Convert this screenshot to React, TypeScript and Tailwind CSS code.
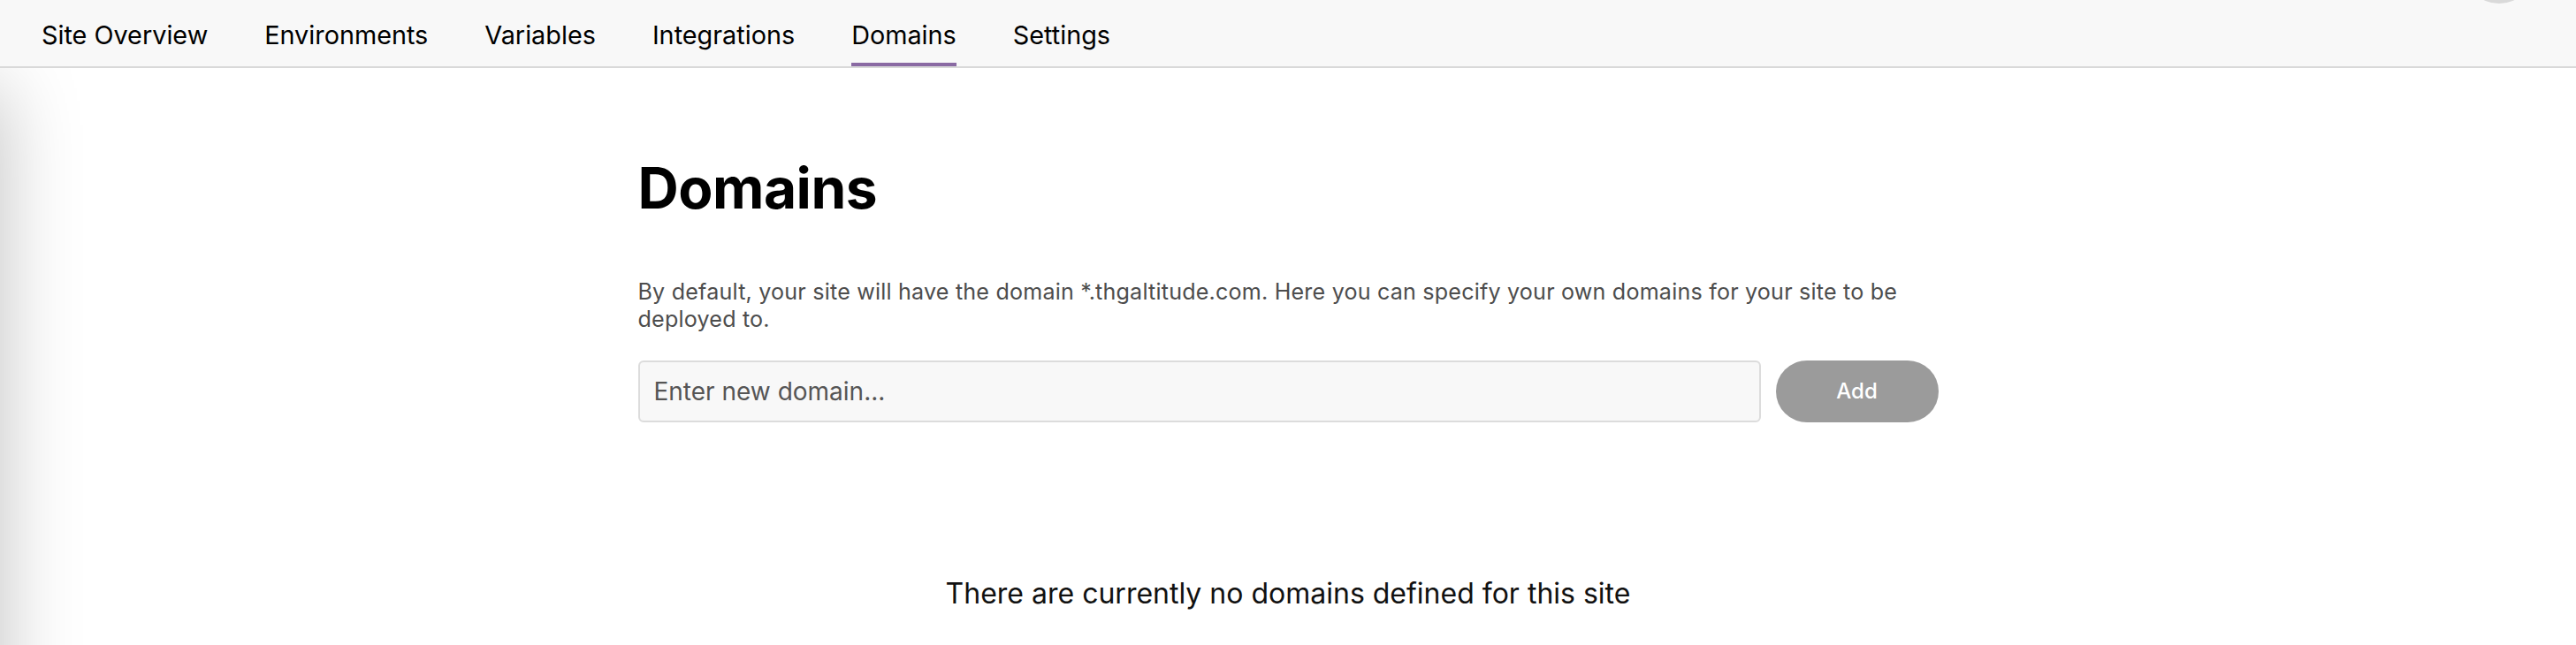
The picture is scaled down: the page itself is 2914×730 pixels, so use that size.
import React from "react";

const tabs = ["Site Overview", "Environments", "Variables", "Integrations", "Domains", "Settings"];

export default function App() {
  return (
    <div
      className="relative min-h-[730px] overflow-hidden bg-white text-black"
      style={{ fontFamily: "Inter, 'Noto Sans', sans-serif" }}
    >
      {/* left edge shadow */}
      <div className="absolute left-[-100px] top-[100px] h-[900px] w-[100px] shadow-[0_0_90px_rgba(0,0,0,0.25)]" />

      <header className="relative z-10 flex h-[77px] gap-[64px] border-b-2 border-[#d9d9d9] bg-[#f8f8f8] pl-[47px]">
        {tabs.map((t) => (
          <div key={t} className="relative h-full pt-[18px]">
            <span className="block text-[28.8px] leading-normal text-black whitespace-nowrap">{t}</span>
            {t === "Domains" && (
              <span className="absolute bottom-0 left-0 right-0 h-[4px] bg-[#8a6aa3]" />
            )}
          </div>
        ))}
        <div className="absolute right-[47px] top-[-76px] h-[80px] w-[80px] rounded-full bg-[#d9d9d9]" />
      </header>

      <main className="relative flex justify-center">
        <div className="w-[1471px]">
          <h1 className="mt-[104px] text-[64px] font-bold leading-none tracking-[-0.5px]">Domains</h1>
          <p className="mt-[70px] text-[25.1px] leading-[31px] tracking-[0.2px] text-[#4d4d4d]">
            By default, your site will have the domain *.thgaltitude.com. Here you can specify your own domains for
            your site to be deployed to.
          </p>
          <div className="mt-[31px] flex gap-[17px]">
            <input
              className="h-[70px] flex-1 rounded-[6px] border-2 border-[#dcdcdc] bg-[#f8f8f8] px-[16px] text-[28px] text-[#333] outline-none placeholder:text-[#555]"
              placeholder="Enter new domain..."
            />
            <button className="h-[70px] w-[184px] rounded-full bg-[#9b9b9b] text-[24px] font-medium text-white">
              Add
            </button>
          </div>
          <p className="mt-[170px] text-center text-[32px] leading-normal text-[#111]">
            There are currently no domains defined for this site
          </p>
        </div>
      </main>
    </div>
  );
}
